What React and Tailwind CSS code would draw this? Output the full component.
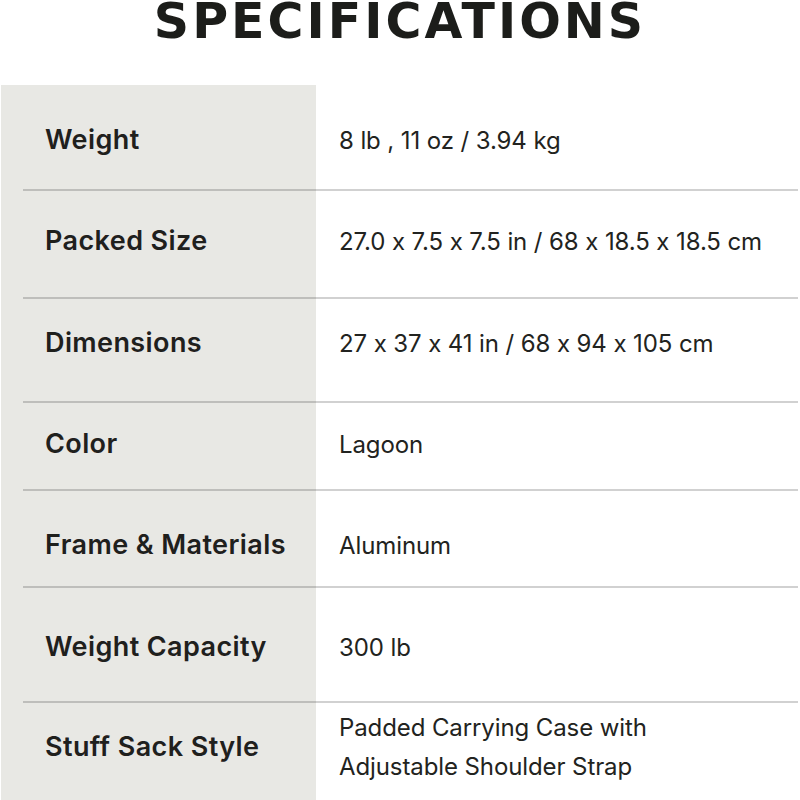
import React from 'react';

const specs = [
  { label: 'Weight', value: ['8 lb , 11 oz / 3.94 kg'], h: 'h-[104px]', shift: 'pt-[6px]' },
  { label: 'Packed Size', value: ['27.0 x 7.5 x 7.5 in / 68 x 18.5 x 18.5 cm'], h: 'h-[106px]', shift: 'pb-[6px]' },
  { label: 'Dimensions', value: ['27 x 37 x 41 in / 68 x 94 x 105 cm'], h: 'h-[102px]', shift: 'pb-[14px]' },
  { label: 'Color', value: ['Lagoon'], h: 'h-[86px]', shift: 'pb-[4px]' },
  { label: 'Frame & Materials', value: ['Aluminum'], h: 'h-[95px]', shift: 'pt-[13px]' },
  { label: 'Weight Capacity', value: ['300 lb'], h: 'h-[113px]', shift: 'pt-[5px]' },
  { label: 'Stuff Sack Style', value: ['Padded Carrying Case with', 'Adjustable Shoulder Strap'], h: 'h-[97px]', shift: 'pb-[9px]' },
];

const SpecRow = ({ spec }) => (
  <div className={`flex items-center ${spec.h} ${spec.shift}`}>
    <div className="w-[316px] shrink-0 pl-[44px] text-[27px] font-semibold leading-[32px] tracking-[0.4px] text-[#1f201d]">
      {spec.label}
    </div>
    <div className="pl-[22px] text-[24px] leading-[39px] tracking-[-0.1px] text-[#222320]">
      {spec.value.map((line) => (
        <div key={line}>{line}</div>
      ))}
    </div>
  </div>
);

export default function App() {
  return (
    <div className="w-[800px] h-[800px] overflow-hidden bg-white font-['Inter',sans-serif] [font-feature-settings:'calt'_0]">
      {/* Heading */}
      <div className="h-[85px] flex justify-center">
        <h1 className="font-['DejaVu_Sans',sans-serif] text-[49px] font-bold leading-[44px] tracking-[3px] text-[#1c1d1a]">
          SPECIFICATIONS
        </h1>
      </div>

      {/* Spec table */}
      <div className="ml-[1px] h-[715px] bg-[linear-gradient(to_right,#e8e8e4_315px,#ffffff_315px)]">
        {specs.map((spec, i) => (
          <React.Fragment key={spec.label}>
            <SpecRow spec={spec} />
            {i < specs.length - 1 && (
              <div className="ml-[22px] mr-[2px] h-[2px] bg-black/[0.18]" />
            )}
          </React.Fragment>
        ))}
      </div>
    </div>
  );
}
